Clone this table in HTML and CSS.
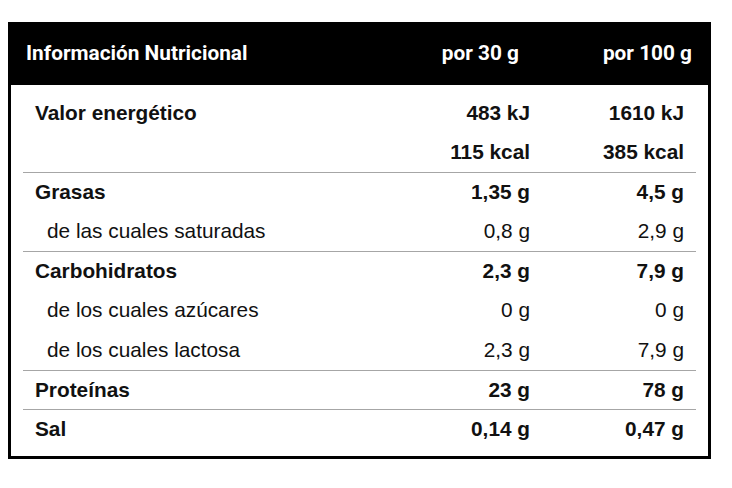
FILE: index.html
```html
<!DOCTYPE html>
<html lang="es">
<head>
<meta charset="utf-8">
<title>Información Nutricional</title>
<link rel="stylesheet" href="styles.css">
</head>
<body>
<div class="panel">
  <div class="head">
    <div class="h-label">Información Nutricional</div>
    <div class="h-val">por 30 g</div>
    <div class="h-val">por 100 g</div>
  </div>
  <div class="body">
    <div class="group">
      <div class="row strong"><span class="lbl">Valor energético</span><span class="val">483 kJ</span><span class="val">1610 kJ</span></div>
      <div class="row strong"><span class="lbl"></span><span class="val">115 kcal</span><span class="val">385 kcal</span></div>
    </div>
    <div class="group">
      <div class="row strong"><span class="lbl">Grasas</span><span class="val">1,35 g</span><span class="val">4,5 g</span></div>
      <div class="row sub"><span class="lbl">de las cuales saturadas</span><span class="val">0,8 g</span><span class="val">2,9 g</span></div>
    </div>
    <div class="group">
      <div class="row strong"><span class="lbl">Carbohidratos</span><span class="val">2,3 g</span><span class="val">7,9 g</span></div>
      <div class="row sub"><span class="lbl">de los cuales azúcares</span><span class="val">0 g</span><span class="val">0 g</span></div>
      <div class="row sub"><span class="lbl">de los cuales lactosa</span><span class="val">2,3 g</span><span class="val">7,9 g</span></div>
    </div>
    <div class="group">
      <div class="row strong"><span class="lbl">Proteínas</span><span class="val">23 g</span><span class="val">78 g</span></div>
    </div>
    <div class="group">
      <div class="row strong"><span class="lbl">Sal</span><span class="val">0,14 g</span><span class="val">0,47 g</span></div>
    </div>
  </div>
</div>
</body>
</html>
```

FILE: styles.css
```css
html, body {
  margin: 0;
  padding: 0;
  background: #ffffff;
}

body {
  padding: 22px 0 0 8px;
}

.panel {
  width: 703px;
  box-sizing: border-box;
  border: 3px solid #000000;
  background: #ffffff;
  color: #111111;
  font-family: "Liberation Sans", Arial, sans-serif;
  font-size: 20.8px;
}

.head {
  display: grid;
  grid-template-columns: 1fr 173px 173px;
  align-items: center;
  height: 56px;
  padding: 0 16px 4px 15px;
  background: #000000;
  color: #ffffff;
  font-family: Roboto, "Liberation Sans", sans-serif;
  font-weight: 700;
  font-size: 20.8px;
}

.h-val {
  text-align: right;
}

.body {
  padding: 8px 12px 7px 12px;
}

.group + .group {
  border-top: 1px solid #a6a6a6;
}

.row {
  display: grid;
  grid-template-columns: 1fr 154px 154px;
  align-items: center;
  height: 39.5px;
  padding: 0 12px;
}

.group + .group .row:first-child {
  height: 38.5px;
}

.row .val {
  text-align: right;
}

.strong {
  font-weight: 700;
}

.sub .lbl {
  padding-left: 12px;
}
```
